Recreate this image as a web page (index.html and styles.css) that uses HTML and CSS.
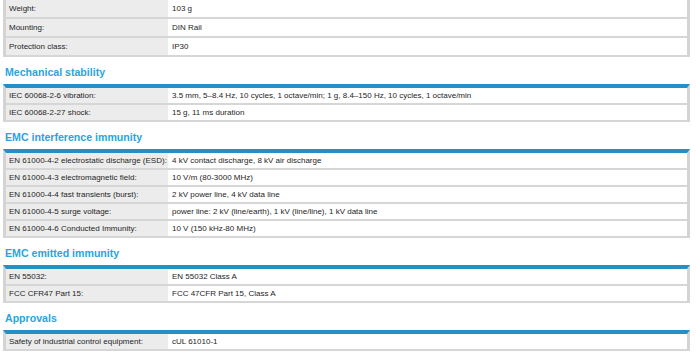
FILE: index.html
```html
<!DOCTYPE html>
<html>
<head>
<meta charset="utf-8">
<link rel="stylesheet" href="styles.css">
</head>
<body>
<div class="page">
  <div class="spec spec-first">
    <div class="row"><div class="label">Weight:</div><div class="value">103 g</div></div>
    <div class="row"><div class="label">Mounting:</div><div class="value">DIN Rail</div></div>
    <div class="row"><div class="label">Protection class:</div><div class="value">IP30</div></div>
  </div>

  <h2 class="heading">Mechanical stability</h2>
  <div class="spec">
    <div class="row"><div class="label">IEC 60068-2-6 vibration:</div><div class="value">3.5 mm, 5–8.4 Hz, 10 cycles, 1 octave/min; 1 g, 8.4–150 Hz, 10 cycles, 1 octave/min</div></div>
    <div class="row"><div class="label">IEC 60068-2-27 shock:</div><div class="value">15 g, 11 ms duration</div></div>
  </div>

  <h2 class="heading">EMC interference immunity</h2>
  <div class="spec">
    <div class="row"><div class="label">EN 61000-4-2 electrostatic discharge (ESD):</div><div class="value">4 kV contact discharge, 8 kV air discharge</div></div>
    <div class="row"><div class="label">EN 61000-4-3 electromagnetic field:</div><div class="value">10 V/m (80-3000 MHz)</div></div>
    <div class="row"><div class="label">EN 61000-4-4 fast transients (burst):</div><div class="value">2 kV power line, 4 kV data line</div></div>
    <div class="row"><div class="label">EN 61000-4-5 surge voltage:</div><div class="value">power line: 2 kV (line/earth), 1 kV (line/line), 1 kV data line</div></div>
    <div class="row"><div class="label">EN 61000-4-6 Conducted Immunity:</div><div class="value">10 V (150 kHz-80 MHz)</div></div>
  </div>

  <h2 class="heading">EMC emitted immunity</h2>
  <div class="spec">
    <div class="row"><div class="label">EN 55032:</div><div class="value">EN 55032 Class A</div></div>
    <div class="row"><div class="label">FCC CFR47 Part 15:</div><div class="value">FCC 47CFR Part 15, Class A</div></div>
  </div>

  <h2 class="heading">Approvals</h2>
  <div class="spec">
    <div class="row"><div class="label">Safety of industrial control equipment:</div><div class="value">cUL 61010-1</div></div>
  </div>
</div>
</body>
</html>
```

FILE: styles.css
```css
html, body {
  margin: 0;
  padding: 0;
  background: #ffffff;
}

.page {
  padding: 0 6px 0 3px;
  font-family: "Liberation Sans", Arial, sans-serif;
  color: #1e1e1e;
}

.heading {
  margin: 0;
  padding: 9px 0 5px 2px;
  font-size: 10.6px;
  line-height: 13px;
  font-weight: bold;
  color: #2aa4de;
}

.spec {
  border-top: 4px solid #2590c8;
  border-left: 3px solid #d4d4d4;
  border-right: 3px solid #d4d4d4;
  box-shadow: inset 0 1px 0 #48aee0;
}

.spec-first {
  border-top: 0;
  box-shadow: none;
}

.row {
  display: grid;
  grid-template-columns: 162px 1fr;
  height: 15px;
  border-bottom: 2px solid #d6d6d6;
  font-size: 8px;
  line-height: 15px;
}

.spec-first .row {
  height: 17px;
  line-height: 17px;
}

.label {
  background: #ececec;
  padding-left: 3px;
  white-space: nowrap;
  overflow: hidden;
}

.value {
  background: #ffffff;
  padding-left: 4px;
  white-space: nowrap;
  overflow: hidden;
}
```
